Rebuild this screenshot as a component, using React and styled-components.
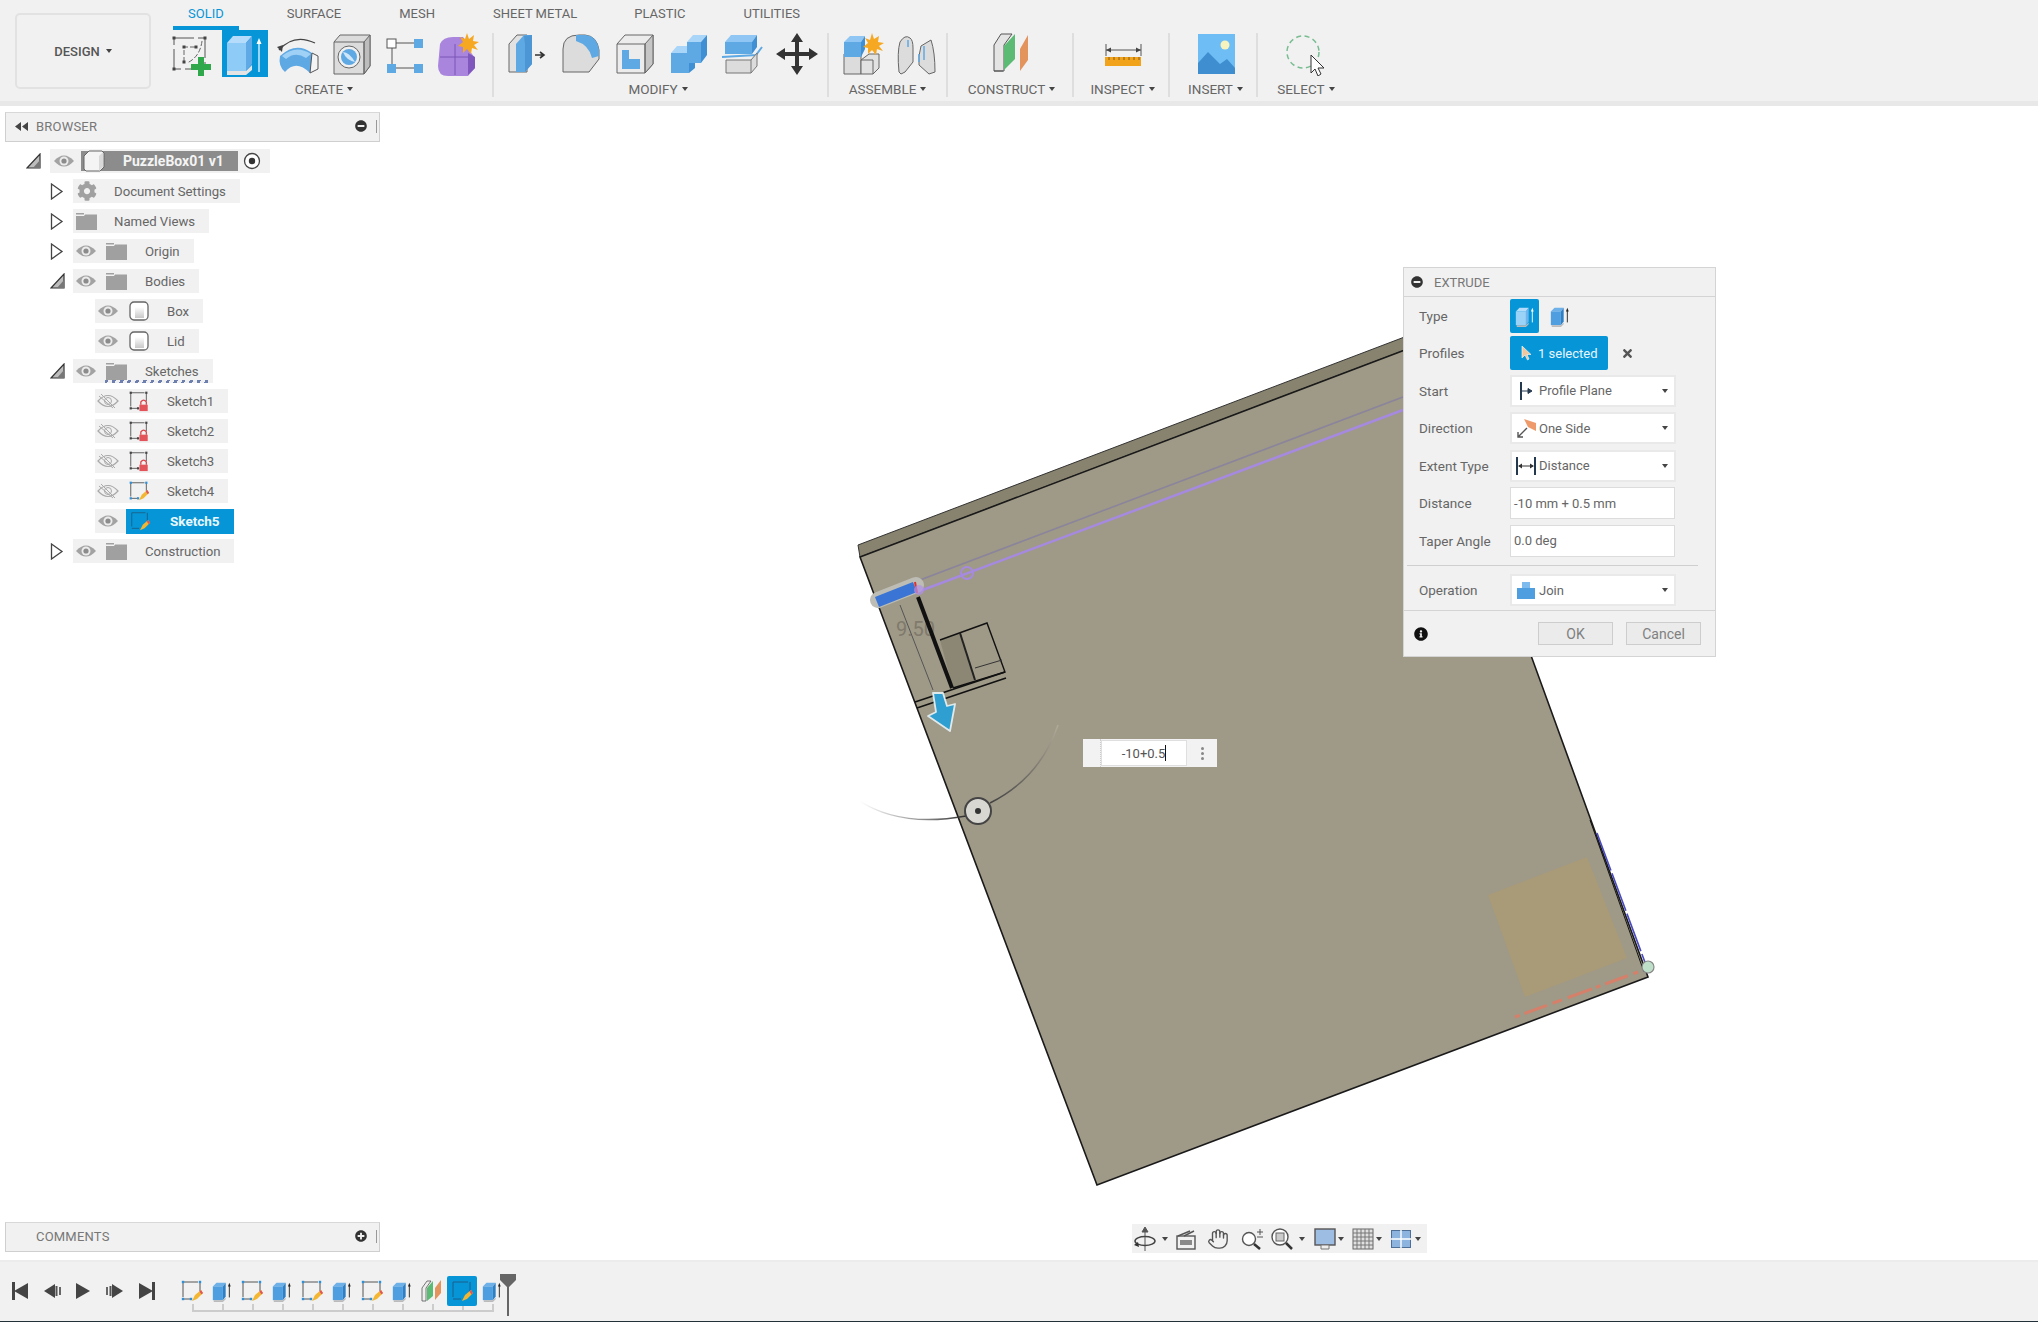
import React from 'react';
import styled, { createGlobalStyle } from 'styled-components';
import { FaCog, FaInfoCircle, FaMinusCircle, FaPlusCircle, FaTimes } from 'react-icons/fa';
import { Hand } from 'lucide-react';

const GlobalStyle = createGlobalStyle`
  html, body { margin: 0; padding: 0; background: #fff; }
  * { box-sizing: border-box; }
`;

const Page = styled.div`
  width: 2038px;
  height: 1322px;
  display: flex;
  flex-direction: column;
  overflow: hidden;
  font-family: Roboto, "Liberation Sans", sans-serif;
  color: #666;
`;

/* ---------- toolbar ---------- */
const Toolbar = styled.div`
  height: 106px;
  flex: none;
  display: flex;
  background: #f1f1f1;
  border-bottom: 5px solid #e8e8e8;
`;
const DesignButton = styled.div`
  width: 136px;
  height: 76px;
  margin: 13px 14px 0 15px;
  border: 2px solid #e2e2e2;
  border-radius: 5px;
  display: flex;
  align-items: center;
  justify-content: center;
  gap: 6px;
  font-size: 13px;
  font-weight: 500;
  color: #555;
`;
const Ribbon = styled.div`
  display: flex;
  flex-direction: column;
`;
const Tabs = styled.div`
  height: 30px;
  display: flex;
  gap: 31px;
  padding-left: 8px;
`;
const Tab = styled.div`
  height: 30px;
  margin-left: ${p => p.$ml || 0}px;
  padding: 6px 15px 0;
  font-size: 13px;
  line-height: 15px;
  white-space: nowrap;
  color: ${p => (p.$active ? '#0696d7' : '#666')};
  border-bottom: 4px solid ${p => (p.$active ? '#0696d7' : 'transparent')};
`;
const Groups = styled.div`
  display: flex;
`;
const Group = styled.div`
  width: ${p => p.$w}px;
  padding: 0 ${p => p.$pr || 0}px 0 ${p => p.$pl || 0}px;
  display: flex;
  flex-direction: column;
  align-items: center;
`;
const Sep = styled.div`
  width: 2px;
  height: 64px;
  margin-top: 3px;
  background: #dedede;
`;
const ToolRow = styled.div`
  height: 47px;
  display: flex;
  justify-content: center;
`;
const ToolCell = styled.div`
  width: ${p => p.$w || 53}px;
  display: flex;
  align-items: center;
  justify-content: center;
`;
const ToolActive = styled.div`
  width: 46px;
  height: 47px;
  background: #0696d7;
  display: flex;
  align-items: center;
  justify-content: center;
`;
const GroupLabel = styled.div`
  height: 24px;
  margin-right: ${p => p.$mr || 0}px;
  display: flex;
  align-items: center;
  gap: 4px;
  font-size: 13.5px;
  color: #666;
  white-space: nowrap;
`;
const Caret = styled.span`
  display: inline-block;
  width: 0;
  height: 0;
  border-left: ${p => p.$s || 3}px solid transparent;
  border-right: ${p => p.$s || 3}px solid transparent;
  border-top: ${p => (p.$s || 3) + 1}px solid #444;
`;

/* ---------- viewport ---------- */
const Viewport = styled.div`
  position: relative;
  flex: 1;
  background: #fff;
`;
const ModelCanvas = styled.svg`
  position: absolute;
  inset: 0;
`;

/* ---------- browser panel ---------- */
const SidePanel = styled.div`
  position: absolute;
  left: 5px;
  width: 375px;
  ${p => (p.$bottom ? `bottom: ${p.$bottom}px;` : `top: ${p.$top}px;`)}
`;
const PanelBar = styled.div`
  height: 30px;
  display: flex;
  align-items: center;
  background: #f1f1f1;
  border: 1px solid #cfcfcf;
  border-top-color: #d8d8d8;
  padding-bottom: 2px;
`;
const PanelArrows = styled.span`
  width: 30px;
  flex: none;
  display: flex;
  justify-content: center;
`;
const PanelTitle = styled.span`
  flex: 1;
  font-size: 13px;
  letter-spacing: 0.2px;
  color: #777;
`;
const PanelGrip = styled.span`
  width: 2px;
  height: 13px;
  margin: 0 1px 0 9px;
  border-left: 1px solid #999;
`;
const Tree = styled.div`
  padding-top: 4px;
`;
const TreeRow = styled.div`
  height: 30px;
  display: flex;
  align-items: center;
  margin-left: ${p => p.$indent}px;
`;
const Expander = styled.div`
  width: ${p => p.$w}px;
  flex: none;
  display: flex;
  align-items: center;
`;
const Pill = styled.div`
  height: 24px;
  display: flex;
  align-items: center;
  background: #f1f1f1;
  padding-right: ${p => p.$pr ?? 14}px;
`;
const Slot = styled.span`
  width: ${p => p.$w}px;
  height: 24px;
  flex: none;
  display: flex;
  align-items: center;
  justify-content: center;
`;
const RowText = styled.span`
  margin-left: ${p => p.$ml}px;
  font-size: 13.2px;
  color: #666;
  white-space: nowrap;
`;
const RootName = styled.div`
  width: 157px;
  height: 20px;
  margin-left: 4px;
  display: flex;
  align-items: center;
  background: #8c8c8c;
  font-size: 14px;
  font-weight: 700;
  color: #f4f4f4;
`;
const RootText = styled.span`
  margin-left: 16px;
  white-space: nowrap;
`;
const SelectedName = styled.div`
  width: 108px;
  height: 25px;
  margin-left: 5px;
  display: flex;
  align-items: center;
  background: #0696d7;
  font-size: 13.5px;
  font-weight: 700;
  color: #eaf6fc;
`;
const SelectedText = styled.span`
  margin-left: 16px;
`;
const WavyText = styled.span`
  position: relative;
  &::after {
    content: '';
    position: absolute;
    left: -40px;
    right: -12px;
    bottom: -4px;
    height: 3px;
    background: repeating-linear-gradient(115deg, #6d7fae 0 3px, transparent 3px 7px);
  }
`;

/* ---------- extrude dialog ---------- */
const Dialog = styled.div`
  position: absolute;
  left: 1403px;
  top: 161px;
  width: 313px;
  height: 390px;
  background: #f1f1f1;
  border: 1px solid #d4d4d4;
  display: flex;
  flex-direction: column;
`;
const DialogHead = styled.div`
  height: 29px;
  flex: none;
  display: flex;
  align-items: center;
  gap: 11px;
  padding-left: 7px;
  font-size: 13px;
  color: #777;
  border-bottom: 1px solid #d4d4d4;
`;
const DialogBody = styled.div`
  flex: 1;
`;
const Field = styled.div`
  height: 37.5px;
  display: flex;
  align-items: center;
  padding-left: 15px;
`;
const FieldLabel = styled.div`
  width: 91px;
  flex: none;
  font-size: 13.5px;
  color: #666;
`;
const TypeBtn = styled.div`
  width: 29px;
  height: 34px;
  display: flex;
  align-items: center;
  justify-content: center;
  background: ${p => (p.$on ? '#0696d7' : 'transparent')};
  border-radius: 2px;
  margin-right: ${p => p.$mr || 0}px;
`;
const SelectedBtn = styled.div`
  width: 98px;
  height: 34px;
  display: flex;
  align-items: center;
  gap: 6px;
  padding-left: 10px;
  background: #0696d7;
  border-radius: 2px;
  font-size: 13px;
  color: #e8f5fb;
`;
const ClearBtn = styled.div`
  margin-left: 13px;
  display: flex;
  color: #555;
`;
const Select = styled.div`
  width: 166px;
  height: 32px;
  display: flex;
  align-items: center;
  background: #fff;
  border: 2px solid #e9e9e9;
  font-size: 13px;
  color: #666;
`;
const SelectIcon = styled.span`
  width: 27px;
  flex: none;
  display: flex;
  justify-content: center;
`;
const SelectText = styled.span`
  flex: 1;
`;
const SelectArrow = styled.span`
  width: 12px;
  display: flex;
`;
const TextField = styled.div`
  width: 165px;
  height: 32px;
  display: flex;
  align-items: center;
  padding-left: 3px;
  background: #fff;
  border: 1px solid #dcdcdc;
  font-size: 13px;
  color: #666;
`;
const DialogRule = styled.div`
  height: 1px;
  margin: 5px 17px 6px 3px;
  background: #cfcfcf;
`;
const DialogFoot = styled.div`
  height: 46px;
  flex: none;
  display: flex;
  align-items: center;
  gap: 13px;
  padding: 0 14px 0 10px;
  border-top: 1px solid #d4d4d4;
`;
const FootInfo = styled.span`
  flex: 1;
  display: flex;
  color: #111;
`;
const FootBtn = styled.div`
  width: 75px;
  height: 23px;
  display: flex;
  align-items: center;
  justify-content: center;
  background: #ebebeb;
  border: 1px solid #cdcdcd;
  font-size: 14px;
  color: #808080;
`;

/* ---------- floating input ---------- */
const ValueBox = styled.div`
  position: absolute;
  left: 1083px;
  top: 633px;
  width: 134px;
  height: 28px;
  display: flex;
  align-items: center;
  background: #f2f2f2;
`;
const ValueGrip = styled.span`
  width: 18px;
  height: 28px;
  border-right: 1px dotted #ccc;
`;
const ValueInput = styled.div`
  width: 86px;
  height: 26px;
  display: flex;
  align-items: center;
  justify-content: center;
  background: #fff;
  border: 1px solid #dfdfdf;
  font-size: 13px;
  color: #555;
`;
const Cursor = styled.span`
  width: 1px;
  height: 16px;
  background: #111;
`;
const ValueMenu = styled.span`
  flex: 1;
  display: flex;
  flex-direction: column;
  align-items: center;
  gap: 2px;
  & > i {
    width: 3px;
    height: 3px;
    border-radius: 50%;
    background: #888;
  }
`;

/* ---------- nav bar ---------- */
const NavBar = styled.div`
  position: absolute;
  left: 1132px;
  bottom: 7px;
  width: 295px;
  height: 29px;
  display: flex;
  align-items: center;
  background: #f1f1f1;
`;
const NavSlot = styled.span`
  width: ${p => p.$w}px;
  margin-left: ${p => p.$ml || 0}px;
  flex: none;
  display: flex;
  align-items: center;
  justify-content: center;
  color: #555;
`;

/* ---------- timeline ---------- */
const Timeline = styled.div`
  height: 62px;
  flex: none;
  display: flex;
  align-items: flex-start;
  padding: 14px 0 0 5px;
  background: #f1f1f1;
  border-bottom: 1px solid #22303a;
  border-top: 2px solid #ececec;
`;
const Transport = styled.div`
  display: flex;
  margin-right: 16px;
`;
const TransportBtn = styled.span`
  width: 31.3px;
  height: 30px;
  display: flex;
  align-items: center;
  justify-content: center;
`;
const StepItem = styled.div`
  position: relative;
  width: 30px;
  height: 36px;
  display: flex;
  justify-content: center;
  &::before {
    content: '';
    position: absolute;
    left: 50%;
    bottom: 0;
    width: 2px;
    height: 8px;
    background: #ccc;
  }
  &::after {
    content: '';
    position: absolute;
    bottom: 0;
    height: 2px;
    left: ${p => (p.$first ? '50%' : '0')};
    right: ${p => (p.$last ? '50%' : '0')};
    background: #ccc;
  }
`;
const StepIcon = styled.div`
  width: 30px;
  height: 30px;
  display: flex;
  align-items: center;
  justify-content: center;
  border-radius: 2px;
  background: ${p => (p.$on ? '#0696d7' : 'transparent')};
  position: relative;
  z-index: 1;
`;
const Marker = styled.svg`
  flex: none;
  margin: -2px 0 0 -7px;
`;

/* ---------- drawings ---------- */
const Sz = ({ s = 44, children }) => (
  <svg width={s} height={s} viewBox="0 0 44 44">{children}</svg>
);

const SketchNew = () => (
  <Sz>
    <path d="M4 6H35V37H4Z M4 6" fill="none" stroke="#555" strokeWidth="1" strokeDasharray="20 4 7 0" />
    <path d="M14 30L14 15H26M32 9Q30 25 17 31" fill="none" stroke="#666" strokeWidth="1" strokeDasharray="5 2" />
    {[[4, 6], [35, 6], [4, 37], [14, 15], [26, 15], [14, 30]].map(([x, y]) => (
      <rect key={x + '' + y} x={x - 1.5} y={y - 1.5} width="3" height="3" fill="#444" />
    ))}
    <path d="M28 25h6v7h7v6h-7v6h-6v-6h-7v-6h7z" fill="#2ea84a" />
  </Sz>
);
const ExtrudeBig = () => (
  <Sz>
    <path d="M4 11L10 4H29L23 11Z" fill="#b5dcfb" />
    <path d="M23 11L29 4V32L23 39Z" fill="#5fa9e6" />
    <rect x="4" y="11" width="19" height="28" fill="#8ecbf7" />
    <path d="M4 39H23L29 33V38L23 43H4Z" fill="#e4e4e4" />
    <path d="M36 40V10" stroke="#fff" strokeWidth="1.200" />
    <path d="M33.500 12L36 6L38.500 12Z" fill="#fff" />
  </Sz>
);
const Revolve = () => (
  <Sz>
    <path d="M3 18Q18 1 39 11" fill="none" stroke="#444" strokeWidth="1.300" />
    <path d="M1 15L7 13L6 20Z" fill="#444" />
    <path d="M4 24Q20 9 36 21L42 30L34 41Q20 27 9 40Q2 34 4 24Z" fill="#5ea9e3" />
    <path d="M6 24Q20 12 35 22L30 26Q19 19 10 27Z" fill="#9fd0f5" />
    <path d="M36 21L42 24V37L34 41Z" fill="#f4f4f4" stroke="#555" />
  </Sz>
);
const Hole = () => (
  <Sz>
    <path d="M5 10L11 3H41V34L35 42H5Z" fill="#dcdcdc" stroke="#666" />
    <path d="M35 10L41 3V34L35 42Z" fill="#bdbdbd" stroke="#666" />
    <path d="M5 10H35V42" fill="none" stroke="#666" />
    <circle cx="20" cy="25" r="11" fill="#f0f0f0" stroke="#666" />
    <circle cx="20" cy="25" r="8" fill="#5ea9e3" />
    <path d="M14 20Q17 28 26 30Q20 20 14 20Z" fill="#cfe6f8" />
  </Sz>
);
const Pattern = () => (
  <Sz>
    <rect x="5" y="7" width="9" height="9" fill="#fff" stroke="#555" />
    <rect x="32" y="7" width="9" height="9" fill="#5ea9e3" />
    <rect x="5" y="32" width="9" height="9" fill="#5ea9e3" />
    <rect x="32" y="32" width="9" height="9" fill="#5ea9e3" />
    <path d="M14 11H32M10 16V32M14 36H32" stroke="#555" />
  </Sz>
);
const Form = () => (
  <Sz>
    <path d="M5 12Q8 5 18 5H28L34 12V18L40 26V36L33 44H13Q3 44 3 34Z" fill="#a985dd" />
    <path d="M5 25H34M20 12V43" stroke="#7a55b5" />
    <path d="M33 21L40 25V36L33 43Z" fill="#7f57bd" />
    <path d="M32 1L34 7L39 3L38 9L44 10L39 13L43 18L37 16L36 22L32 17L28 21L28 15L23 14L28 10L25 5L30 7Z" fill="#f7a823" />
  </Sz>
);
const PressPull = () => (
  <Sz>
    <path d="M4 40V12L12 3H22V40Z" fill="#e2e2e2" stroke="#666" />
    <path d="M11 40V12L19 3H27V32L20 40Z" fill="#5ea9e3" />
    <path d="M19 4L27 3V32L20 40V12Z" fill="#4d96d5" />
    <path d="M30 23H38M35 20L39 23L35 26" fill="none" stroke="#333" strokeWidth="1.600" />
  </Sz>
);
const Fillet = () => (
  <Sz>
    <path d="M4 40V17Q4 3 20 3H26Q38 4 40 18V27L30 40Z" fill="#dcdcdc" stroke="#666" />
    <path d="M17 3H26Q38 4 40 18V24L33 26Q30 13 17 9Z" fill="#5ea9e3" />
  </Sz>
);
const Shell = () => (
  <Sz>
    <path d="M4 12L12 3H40V32L32 41H4Z" fill="#ececec" stroke="#666" />
    <path d="M32 12L40 3V32L32 41Z" fill="#c6c6c6" stroke="#666" />
    <path d="M4 12H32V41" fill="none" stroke="#666" />
    <path d="M9 18H16V27H27V37H9Z" fill="#5ea9e3" />
  </Sz>
);
const Combine = () => (
  <Sz>
    <path d="M4 21L10 14H22V27H4Z" fill="#a9d5f8" />
    <path d="M20 10L26 3H40L34 10Z" fill="#a9d5f8" />
    <path d="M20 10H34V31H22V41H4V21H20Z" fill="#5ea9e3" />
    <path d="M34 10L40 3V23L34 31Z" fill="#3e8fd4" />
    <path d="M22 31L28 31L28 36L22 41Z" fill="#3e8fd4" />
  </Sz>
);
const OffsetPlane = () => (
  <Sz>
    <path d="M4 10L10 3H36L31 10Z" fill="#8fc6f3" />
    <path d="M4 10H31V22H4Z" fill="#5ea9e3" />
    <path d="M31 10L36 3V15L31 22Z" fill="#3e8fd4" />
    <path d="M1 25L35 23L41 15" fill="none" stroke="#5ea9e3" strokeWidth="2" />
    <path d="M5 28H30L36 21V34L30 41H5Z" fill="#dcdcdc" stroke="#777" />
    <path d="M30 28V41" stroke="#777" />
  </Sz>
);
const MoveArrows = () => (
  <Sz>
    <path d="M22 1L28 10H24V20H34V16L43 22L34 28V24H24V34H28L22 43L16 34H20V24H10V28L1 22L10 16V20H20V10H16Z" fill="#333" />
  </Sz>
);
const NewComponent = () => (
  <Sz>
    <path d="M3 22H20V42H3Z" fill="#dcdcdc" stroke="#666" />
    <path d="M20 28L28 22H38V36L32 42H20Z" fill="#e2e2e2" stroke="#666" />
    <path d="M20 28H32V42" fill="none" stroke="#666" />
    <path d="M3 10L9 4H24L20 10Z" fill="#8fc6f3" />
    <rect x="3" y="10" width="17" height="15" fill="#5ea9e3" />
    <path d="M20 10L24 4V17L20 25Z" fill="#3e8fd4" />
    <path d="M31 1L33 7L38 4L37 10L43 11L38 14L42 19L36 17L35 23L31 18L27 22L27 16L22 15L27 11L24 6L29 8Z" fill="#f7a823" />
  </Sz>
);
const Joint = () => (
  <Sz>
    <path d="M4 40Q2 20 5 10Q10 2 15 6Q18 8 18 16V30L10 40L6 42Z" fill="#dcdcdc" stroke="#666" />
    <path d="M26 14L36 8Q40 20 40 40L34 42L24 33V24Z" fill="#dcdcdc" stroke="#666" />
    <path d="M13 8V15M29 14V28M24 22V30" stroke="#5ea9e3" strokeWidth="1.500" />
  </Sz>
);
const Construct = () => (
  <Sz>
    <path d="M4 39V13L11 2H22L14 13V39Z" fill="#e4e4e4" stroke="#555" />
    <path d="M4 39H13" stroke="#555" />
    <path d="M14 38V14L25 2V27Z" fill="#5bbb74" />
    <path d="M30 39V17L38 3V28Z" fill="#e3935c" />
  </Sz>
);
const Ruler = () => (
  <Sz>
    <path d="M5 12V24M40 12V24M5 18H40" stroke="#555" fill="none" />
    <path d="M5 18L10 15.500V20.500ZM40 18L35 15.500V20.500Z" fill="#444" />
    <rect x="4" y="25" width="36" height="9" fill="#f2a31c" />
    <path d="M8 25v3M13 25v3M18 25v3M23 25v3M28 25v3M33 25v3M38 25v3" stroke="#8a5a0a" />
  </Sz>
);
const Picture = () => (
  <Sz>
    <rect x="4" y="2" width="37" height="40" fill="#6fbdf5" />
    <circle cx="31" cy="13" r="4.500" fill="#f6f3bf" />
    <path d="M4 31L14 20L26 32L33 27L41 36V42H4Z" fill="#3f8fd0" />
  </Sz>
);
const SelectLasso = () => (
  <Sz>
    <circle cx="19" cy="20" r="16" fill="none" stroke="#78bd92" strokeWidth="1.500" strokeDasharray="5 3.500" />
    <path d="M27 23L27 41L31 37L34 44L37 42L34 36L40 36Z" fill="#fff" stroke="#333" />
  </Sz>
);

const ExtrudeMini = ({ s = 22, dark }) => (
  <svg width={s} height={s} viewBox="0 0 24 24">
    <path d="M2 7L6 3H16L13 7Z" fill={dark ? '#6eb0e8' : '#b5dcfb'} />
    <path d="M13 7L16 3V18L13 22Z" fill={dark ? '#2f7fc4' : '#6fb5ec'} />
    <rect x="2" y="7" width="11" height="15" fill={dark ? '#4f9fe0' : '#9ad2f8'} />
    <path d="M3 22H13L16 19V21L13 24H3Z" fill="#bbb" />
    <path d="M20 19V6" stroke={dark ? '#222' : '#fff'} strokeWidth="1" />
    <path d="M18.500 7L20 3L21.500 7Z" fill={dark ? '#222' : '#fff'} />
  </svg>
);
const SketchMini = ({ lock, dim, s = 24 }) => {
  const dot = lock ? '#444' : '#2f8fd8';
  return (
    <svg width={s} height={s} viewBox="0 0 24 24">
      <path d="M3 3H20M3 3V20M3 20H11M20 3V12" fill="none" stroke={dim ? '#1a5f8a' : '#555'} strokeWidth="1" strokeDasharray="15 2 3 2" />
      {!dim && [[3, 3], [20, 3], [3, 20], [11, 20]].map(([x, y]) => (
        <rect key={x + '-' + y} x={x - 1.200} y={y - 1.200} width="2.400" height="2.400" fill={dot} />
      ))}
      {lock ? (
        <g>
          <path d="M14 16V13Q17 9 20 13V16" fill="none" stroke="#d9434b" strokeWidth="1.400" />
          <rect x="12.500" y="16" width="9" height="7" fill="#e2535a" />
        </g>
      ) : (
        <g>
          <path d="M12 22L15 16L21 11L23 14L17 20Z" fill="#f2b632" />
          <path d="M21 11L23 14L21.500 15.500L19.500 12.500Z" fill="#e2535a" />
        </g>
      )}
    </svg>
  );
};
const ConstructMini = () => (
  <svg width="24" height="24" viewBox="0 0 24 24">
    <path d="M2 22V9L7 2H11L6 9V22Z" fill="#eee" stroke="#555" strokeWidth="0.800" />
    <path d="M7 22V9L13 2V17Z" fill="#5bbb74" />
    <path d="M15 21V9L21 1V14Z" fill="#e3935c" />
  </svg>
);
const Eye = () => (
  <svg width="22" height="16" viewBox="0 0 22 16">
    <path d="M1 8Q11 -3 21 8Q11 19 1 8Z" fill="#a3a3a3" />
    <circle cx="11" cy="8" r="4.500" fill="#ececec" />
    <circle cx="11" cy="8" r="2.600" fill="#8c8c8c" />
  </svg>
);
const EyeOff = () => (
  <svg width="22" height="16" viewBox="0 0 22 16">
    <path d="M1 8Q11 -3 21 8Q11 19 1 8Z" fill="none" stroke="#a9a9a9" strokeWidth="1.200" />
    <circle cx="11" cy="8" r="3.500" fill="none" stroke="#a9a9a9" />
    <path d="M4 1L18 15M2 3L16 15" stroke="#a9a9a9" />
  </svg>
);
const Folder = () => (
  <svg width="21" height="18" viewBox="0 0 21 18">
    <path d="M0 1H8V2.500H0ZM0 4H8L9 2.500H21V18H0Z" fill="#a0a0a0" />
  </svg>
);
const BodyIcon = () => (
  <svg width="20" height="20" viewBox="0 0 20 20">
    <defs>
      <linearGradient id="bodyShade" x1="0" y1="0" x2="0" y2="1">
        <stop offset="0" stopColor="#fff" />
        <stop offset="1" stopColor="#c8c8c8" />
      </linearGradient>
    </defs>
    <rect x="1" y="1" width="18" height="18" rx="4" fill="#fff" stroke="#666" strokeWidth="1.300" />
    <rect x="6" y="6" width="9" height="11" fill="url(#bodyShade)" />
  </svg>
);
const CubeIcon = () => (
  <svg width="22" height="22" viewBox="0 0 22 22">
    <path d="M1 6L6 1H19L21 3V17L17 21H3L1 19Z" fill="#f4f4f4" stroke="#666" />
    <path d="M16 6L20 2V17L16 21Z" fill="#d9d9d9" />
  </svg>
);
const Radio = () => (
  <svg width="18" height="18" viewBox="0 0 18 18">
    <circle cx="9" cy="9" r="7.500" fill="#fff" stroke="#444" strokeWidth="1.300" />
    <circle cx="9" cy="9" r="3.200" fill="#333" />
  </svg>
);
const TriDown = () => (
  <svg width="16" height="16" viewBox="0 0 16 16">
    <path d="M1 15L14 1V15Z" fill="#bdbdbd" stroke="#333" strokeWidth="1.200" />
    <path d="M7 15L14 7V15Z" fill="#777" />
  </svg>
);
const TriRight = () => (
  <svg width="14" height="17" viewBox="0 0 14 17">
    <path d="M1.500 1L12 8.500L1.500 16Z" fill="#fff" stroke="#444" strokeWidth="1.300" />
  </svg>
);
const Arrows2 = () => (
  <svg width="13" height="9" viewBox="0 0 13 9">
    <path d="M6 0V9L0 4.500ZM13 0V9L7 4.500Z" fill="#444" />
  </svg>
);
const CursorMini = () => (
  <svg width="12" height="16" viewBox="0 0 12 16">
    <path d="M2 1V13L5 10L7.500 15L9 14L7 9.500H11Z" fill="#f0c8a0" stroke="#fff" strokeWidth="0.600" />
  </svg>
);
const StartIcon = () => (
  <svg width="16" height="20" viewBox="0 0 16 20">
    <path d="M3 1V19" stroke="#24384f" strokeWidth="2" />
    <path d="M4 10H12M10 7.500L14 10L10 12.500Z" fill="#24384f" stroke="#24384f" />
  </svg>
);
const DirectionIcon = () => (
  <svg width="22" height="22" viewBox="0 0 22 22">
    <path d="M9 2L21 6V14L13 10Z" fill="#ee9a6a" />
    <path d="M12 11L3 20M3 15V20H8" fill="none" stroke="#555" strokeWidth="1.400" />
  </svg>
);
const DistanceIcon = () => (
  <svg width="22" height="20" viewBox="0 0 22 20">
    <path d="M2 1V19M20 1V19" stroke="#24384f" strokeWidth="2" />
    <path d="M4 10H18" stroke="#333" />
    <path d="M3 10L7 7.500V12.500ZM19 10L15 7.500V12.500Z" fill="#333" />
  </svg>
);
const JoinIcon = () => (
  <svg width="20" height="20" viewBox="0 0 20 20">
    <path d="M6 2H14V8H6Z" fill="#7dbbee" />
    <path d="M1 8H19V19H1Z" fill="#4f9fe0" />
  </svg>
);
const Skip = ({ dir, bar, s = 20 }) => (
  <svg width={s} height={s} viewBox="0 0 20 20" style={dir === 'l' ? { transform: 'scaleX(-1)' } : undefined}>
    <path d="M3 2L17 10L3 18Z" fill="#444" />
    {bar && <rect x="16" y="1" width="3" height="18" fill="#444" />}
  </svg>
);
const Step = ({ dir }) => (
  <svg width="18" height="18" viewBox="0 0 18 18" style={dir === 'l' ? { transform: 'scaleX(-1)' } : undefined}>
    <rect x="0" y="5" width="2" height="8" fill="#666" />
    <rect x="3.500" y="4" width="2" height="10" fill="#555" />
    <path d="M6 2L17 9L6 16Z" fill="#444" />
  </svg>
);
const Orbit = () => (
  <svg width="24" height="26" viewBox="0 0 24 26">
    <path d="M12 1L15 6H9ZM12 6V25" stroke="#555" fill="#555" />
    <ellipse cx="12" cy="15" rx="10" ry="4.500" fill="none" stroke="#444" strokeWidth="1.500" />
    <path d="M5 16L1 19L6 21Z" fill="#333" />
  </svg>
);
const LookAt = () => (
  <svg width="22" height="22" viewBox="0 0 22 22">
    <rect x="2" y="8" width="18" height="13" fill="none" stroke="#555" strokeWidth="1.400" />
    <rect x="5" y="12" width="12" height="5" fill="#8a8a8a" />
    <path d="M3 8L15 3M9 8L19 3" stroke="#555" strokeWidth="1.400" />
  </svg>
);
const ZoomPM = () => (
  <svg width="24" height="24" viewBox="0 0 24 24">
    <circle cx="9" cy="12" r="6.500" fill="#fff" stroke="#555" strokeWidth="1.400" />
    <path d="M14 17L20 22" stroke="#333" strokeWidth="2.500" />
    <path d="M17 5H23M20 2V8M17 10H23" stroke="#555" />
  </svg>
);
const ZoomFit = () => (
  <svg width="24" height="24" viewBox="0 0 24 24">
    <circle cx="10" cy="10" r="8" fill="#fff" stroke="#555" strokeWidth="1.400" />
    <rect x="6" y="6" width="8" height="8" fill="#ccc" stroke="#666" />
    <path d="M16 16L22 22" stroke="#333" strokeWidth="2.500" />
  </svg>
);
const Display = () => (
  <svg width="22" height="22" viewBox="0 0 22 22">
    <rect x="1" y="1" width="20" height="16" fill="#9dbde3" stroke="#555" strokeWidth="1.400" />
    <path d="M7 17H15V21H7Z" fill="#eee" stroke="#777" />
  </svg>
);
const GridIcon = () => (
  <svg width="22" height="22" viewBox="0 0 22 22">
    <rect x="1" y="1" width="20" height="20" fill="#e0e0e0" stroke="#666" />
    <path d="M5 1V21M9 1V21M13 1V21M17 1V21M1 5H21M1 9H21M1 13H21M1 17H21" stroke="#777" />
  </svg>
);
const Viewports = () => (
  <svg width="20" height="18" viewBox="0 0 20 18">
    <rect x="0.500" y="0.500" width="19" height="17" fill="#8db4de" stroke="#4e6f96" />
    <path d="M10 0V18M0 9H20" stroke="#fff" strokeWidth="1.400" />
  </svg>
);

const Model = () => (
  <ModelCanvas width="2038" height="1154" viewBox="0 106 2038 1154">
    <defs>
      <linearGradient id="arcLeft" gradientUnits="userSpaceOnUse" x1="860" y1="0" x2="965" y2="0">
        <stop offset="0" stopColor="#555" stopOpacity="0" />
        <stop offset="1" stopColor="#333" />
      </linearGradient>
      <linearGradient id="arcRight" gradientUnits="userSpaceOnUse" x1="990" y1="800" x2="1058" y2="725">
        <stop offset="0" stopColor="#444" />
        <stop offset="1" stopColor="#b0aa98" />
      </linearGradient>
    </defs>
    {/* plate */}
    <path d="M858 545L1415 333L1418 345L860 557Z" fill="#87836f" stroke="#333" strokeWidth="1" />
    <path d="M860 557L1418 345L1648 977L1097 1185Z" fill="#9f9987" stroke="#1a1a1a" strokeWidth="1.600" />
    <path d="M1590 820L1644 972" stroke="#111" strokeWidth="1" />
    <path d="M1597 833L1646 965" stroke="#4a4ac0" strokeWidth="1.600" strokeDasharray="40 3" />
    <path d="M1488 895L1587 857L1627 958L1525 997Z" fill="#a99b78" />
    <path d="M1515 1017L1638 972" stroke="#d5806a" strokeWidth="3" strokeDasharray="5 5 24 6 10 6 26 4" />
    <circle cx="1648" cy="967" r="6" fill="#bfe0c8" stroke="#888" strokeWidth="1.200" />

    {/* sketch lines */}
    <path d="M920 580L1403 397" stroke="#8a849c" strokeWidth="1.500" />
    <path d="M920 591L1403 410" stroke="#a68ae0" strokeWidth="2.500" />
    <circle cx="967" cy="573" r="6" fill="none" stroke="#a68ae0" strokeWidth="2" />

    {/* notch */}
    <path d="M900 605L933 690" stroke="#555" strokeWidth="1" />
    <text x="896" y="636" fontSize="20" fill="#7f7a6c" fontFamily="Roboto, sans-serif">9.50</text>
    <path d="M940 640L960 633L975 680L953 688Z" fill="#8c8775" />
    <path d="M940 640L987 623L1005 672L953 688" fill="none" stroke="#111" strokeWidth="1.400" />
    <path d="M960 633L975 680" stroke="#222" strokeWidth="2" />
    <path d="M975 668L1002 660" stroke="#333" strokeWidth="1" />
    <path d="M915 702L1005 672M917 708L1006 678" stroke="#111" strokeWidth="1.600" />
    <path d="M918 597L952 688" stroke="#111" strokeWidth="4" />

    {/* blue profile handle */}
    <path d="M878 600L916 585" stroke="#bdbdb5" strokeWidth="16" strokeLinecap="round" />
    <path d="M877 602L915 587" stroke="#3a74d4" strokeWidth="11" />
    <path d="M915 582L917 593" stroke="#e03030" strokeWidth="2" />
    <circle cx="919" cy="590" r="5" fill="#b090e8" opacity="0.700" />

    {/* direction arrow */}
    <path d="M933 693H943L947 706L955 704L950 731L928 716L936 712Z" fill="#2e9fd0" stroke="#dfe9ea" strokeWidth="1.800" strokeLinejoin="round" />

    {/* angle arc */}
    <path d="M858 800Q900 828 966 816" fill="none" stroke="url(#arcLeft)" strokeWidth="1.500" />
    <path d="M990 803Q1040 778 1058 725" fill="none" stroke="url(#arcRight)" strokeWidth="1.500" />
    <circle cx="978" cy="811" r="13" fill="#d9d7d1" stroke="#444" strokeWidth="2" />
    <circle cx="978" cy="811" r="3" fill="#333" />
  </ModelCanvas>
);

const rows = [
  { id: 'settings', lvl: 1, exp: 'r', icon: <FaCog size={20} color="#a0a0a0" />, label: 'Document Settings', noEye: true },
  { id: 'views', lvl: 1, exp: 'r', icon: <Folder />, label: 'Named Views', noEye: true },
  { id: 'origin', lvl: 1, exp: 'r', icon: <Folder />, label: 'Origin' },
  { id: 'bodies', lvl: 1, exp: 'd', icon: <Folder />, label: 'Bodies' },
  { id: 'box', lvl: 2, icon: <BodyIcon />, label: 'Box' },
  { id: 'lid', lvl: 2, icon: <BodyIcon />, label: 'Lid' },
  { id: 'sketches', lvl: 1, exp: 'd', icon: <Folder />, label: 'Sketches', wavy: true },
  { id: 's1', lvl: 2, off: true, icon: <SketchMini lock s={22} />, label: 'Sketch1' },
  { id: 's2', lvl: 2, off: true, icon: <SketchMini lock s={22} />, label: 'Sketch2' },
  { id: 's3', lvl: 2, off: true, icon: <SketchMini lock s={22} />, label: 'Sketch3' },
  { id: 's4', lvl: 2, off: true, icon: <SketchMini s={22} />, label: 'Sketch4' },
  { id: 's5', lvl: 2, selected: true, label: 'Sketch5' },
  { id: 'construction', lvl: 1, exp: 'r', icon: <Folder />, label: 'Construction' },
];

const TreeItem = ({ row }) => {
  const indent = row.lvl === 1 ? 45 : 90;
  return (
    <TreeRow $indent={indent}>
      {row.lvl === 1 && (
        <Expander $w={23}>{row.exp === 'r' ? <TriRight /> : <TriDown />}</Expander>
      )}
      {row.selected ? (
        <Pill $pr={0}>
          <Slot $w={26}><Eye /></Slot>
          <SelectedName>
            <Slot $w={28}><SketchMini dim s={22} /></Slot>
            <SelectedText>{row.label}</SelectedText>
          </SelectedName>
        </Pill>
      ) : (
        <Pill>
          {!row.noEye && <Slot $w={26}>{row.off ? <EyeOff /> : <Eye />}</Slot>}
          <Slot $w={row.noEye ? 27 : 35}>{row.icon}</Slot>
          <RowText $ml={row.noEye ? 14 : 11}>
            {row.wavy ? <WavyText>{row.label}</WavyText> : row.label}
          </RowText>
        </Pill>
      )}
    </TreeRow>
  );
};

const timelineSteps = [
  <SketchMini key="a" />, <ExtrudeMini key="b" dark />, <SketchMini key="c" />, <ExtrudeMini key="d" dark />,
  <SketchMini key="e" />, <ExtrudeMini key="f" dark />, <SketchMini key="g" />, <ExtrudeMini key="h" dark />,
  <ConstructMini key="i" />, <SketchMini key="j" dim />, <ExtrudeMini key="k" dark />,
];

const navItems = [
  { w: 26, el: <Orbit /> }, { w: 14, el: <Caret /> }, { w: 28, el: <LookAt /> },
  { w: 36, el: <Hand size={22} strokeWidth={1.500} /> }, { w: 32, el: <ZoomPM /> },
  { w: 28, el: <ZoomFit /> }, { w: 12, el: <Caret /> }, { w: 22, ml: 6, el: <Display /> },
  { w: 10, el: <Caret /> }, { w: 22, ml: 6, el: <GridIcon /> }, { w: 10, el: <Caret /> },
  { w: 22, ml: 6, el: <Viewports /> }, { w: 12, el: <Caret /> },
];

const SelectField = ({ label, icon, value }) => (
  <Field>
    <FieldLabel>{label}</FieldLabel>
    <Select>
      <SelectIcon>{icon}</SelectIcon>
      <SelectText>{value}</SelectText>
      <SelectArrow><Caret $s={3.500} /></SelectArrow>
    </Select>
  </Field>
);

export default function App() {
  return (
    <Page>
      <GlobalStyle />
      <Toolbar>
        <DesignButton>DESIGN <Caret /></DesignButton>
        <Ribbon>
          <Tabs>
            <Tab $active>SOLID</Tab>
            <Tab $ml={2}>SURFACE</Tab>
            <Tab $ml={-3}>MESH</Tab>
            <Tab $ml={-3}>SHEET METAL</Tab>
            <Tab $ml={-4}>PLASTIC</Tab>
            <Tab $ml={-3}>UTILITIES</Tab>
          </Tabs>
          <Groups>
            <Group $w={327} $pr={9}>
              <ToolRow>
                <ToolCell><SketchNew /></ToolCell>
                <ToolCell><ToolActive><ExtrudeBig /></ToolActive></ToolCell>
                <ToolCell><Revolve /></ToolCell>
                <ToolCell><Hole /></ToolCell>
                <ToolCell><Pattern /></ToolCell>
                <ToolCell><Form /></ToolCell>
              </ToolRow>
              <GroupLabel>CREATE <Caret /></GroupLabel>
            </Group>
            <Sep />
            <Group $w={333} $pl={6} $pr={3}>
              <ToolRow>
                <ToolCell $w={54}><PressPull /></ToolCell>
                <ToolCell $w={54}><Fillet /></ToolCell>
                <ToolCell $w={54}><Shell /></ToolCell>
                <ToolCell $w={54}><Combine /></ToolCell>
                <ToolCell $w={54}><OffsetPlane /></ToolCell>
                <ToolCell $w={54}><MoveArrows /></ToolCell>
              </ToolRow>
              <GroupLabel $mr={8}>MODIFY <Caret /></GroupLabel>
            </Group>
            <Sep />
            <Group $w={117} $pl={7} $pr={2}>
              <ToolRow>
                <ToolCell $w={54}><NewComponent /></ToolCell>
                <ToolCell $w={54}><Joint /></ToolCell>
              </ToolRow>
              <GroupLabel $mr={5}>ASSEMBLE <Caret /></GroupLabel>
            </Group>
            <Sep />
            <Group $w={124} $pl={3}>
              <ToolRow><ToolCell><Construct /></ToolCell></ToolRow>
              <GroupLabel>CONSTRUCT <Caret /></GroupLabel>
            </Group>
            <Sep />
            <Group $w={94} $pl={3}>
              <ToolRow><ToolCell><Ruler /></ToolCell></ToolRow>
              <GroupLabel>INSPECT <Caret /></GroupLabel>
            </Group>
            <Sep />
            <Group $w={86} $pl={5}>
              <ToolRow><ToolCell><Picture /></ToolCell></ToolRow>
              <GroupLabel>INSERT <Caret /></GroupLabel>
            </Group>
            <Sep />
            <Group $w={90} $pl={6}>
              <ToolRow><ToolCell><SelectLasso /></ToolCell></ToolRow>
              <GroupLabel>SELECT <Caret /></GroupLabel>
            </Group>
          </Groups>
        </Ribbon>
      </Toolbar>

      <Viewport>
        <Model />

        <SidePanel $top={6}>
          <PanelBar>
            <PanelArrows><Arrows2 /></PanelArrows>
            <PanelTitle>BROWSER</PanelTitle>
            <FaMinusCircle size={12} color="#333" />
            <PanelGrip />
          </PanelBar>
          <Tree>
            <TreeRow $indent={21}>
              <Expander $w={24}><TriDown /></Expander>
              <Pill $pr={4}>
                <Slot $w={27}><Eye /></Slot>
                <RootName>
                  <Slot $w={26}><CubeIcon /></Slot>
                  <RootText>PuzzleBox01 v1</RootText>
                </RootName>
                <Slot $w={28}><Radio /></Slot>
              </Pill>
            </TreeRow>
            {rows.map(row => <TreeItem key={row.id} row={row} />)}
          </Tree>
        </SidePanel>

        <Dialog>
          <DialogHead>
            <FaMinusCircle size={12} color="#333" />
            EXTRUDE
          </DialogHead>
          <DialogBody>
            <Field>
              <FieldLabel>Type</FieldLabel>
              <TypeBtn $on $mr={6}><ExtrudeMini /></TypeBtn>
              <TypeBtn><ExtrudeMini dark /></TypeBtn>
            </Field>
            <Field>
              <FieldLabel>Profiles</FieldLabel>
              <SelectedBtn><CursorMini /> 1 selected</SelectedBtn>
              <ClearBtn><FaTimes size={13} /></ClearBtn>
            </Field>
            <SelectField label="Start" icon={<StartIcon />} value="Profile Plane" />
            <SelectField label="Direction" icon={<DirectionIcon />} value="One Side" />
            <SelectField label="Extent Type" icon={<DistanceIcon />} value="Distance" />
            <Field>
              <FieldLabel>Distance</FieldLabel>
              <TextField>-10 mm + 0.5 mm</TextField>
            </Field>
            <Field>
              <FieldLabel>Taper Angle</FieldLabel>
              <TextField>0.0 deg</TextField>
            </Field>
            <DialogRule />
            <SelectField label="Operation" icon={<JoinIcon />} value="Join" />
          </DialogBody>
          <DialogFoot>
            <FootInfo><FaInfoCircle size={14} /></FootInfo>
            <FootBtn>OK</FootBtn>
            <FootBtn>Cancel</FootBtn>
          </DialogFoot>
        </Dialog>

        <ValueBox>
          <ValueGrip />
          <ValueInput>-10+0.5<Cursor /></ValueInput>
          <ValueMenu><i /><i /><i /></ValueMenu>
        </ValueBox>

        <SidePanel $bottom={8}>
          <PanelBar>
            <PanelArrows />
            <PanelTitle>COMMENTS</PanelTitle>
            <FaPlusCircle size={12} color="#333" />
            <PanelGrip />
          </PanelBar>
        </SidePanel>

        <NavBar>
          {navItems.map((it, i) => (
            <NavSlot key={i} $w={it.w} $ml={it.ml}>{it.el}</NavSlot>
          ))}
        </NavBar>
      </Viewport>

      <Timeline>
        <Transport>
          <TransportBtn><Skip dir="l" bar /></TransportBtn>
          <TransportBtn><Step dir="l" /></TransportBtn>
          <TransportBtn><Skip /></TransportBtn>
          <TransportBtn><Step /></TransportBtn>
          <TransportBtn><Skip bar /></TransportBtn>
        </Transport>
        {timelineSteps.map((el, i) => (
          <StepItem key={i} $first={i === 0} $last={i === timelineSteps.length - 1}>
            <StepIcon $on={i === 9}>{el}</StepIcon>
          </StepItem>
        ))}
        <Marker width="16" height="42" viewBox="0 0 16 42">
          <path d="M0 0H16V6L9 13V42H7V13L0 6Z" fill="#666" />
        </Marker>
      </Timeline>
    </Page>
  );
}
